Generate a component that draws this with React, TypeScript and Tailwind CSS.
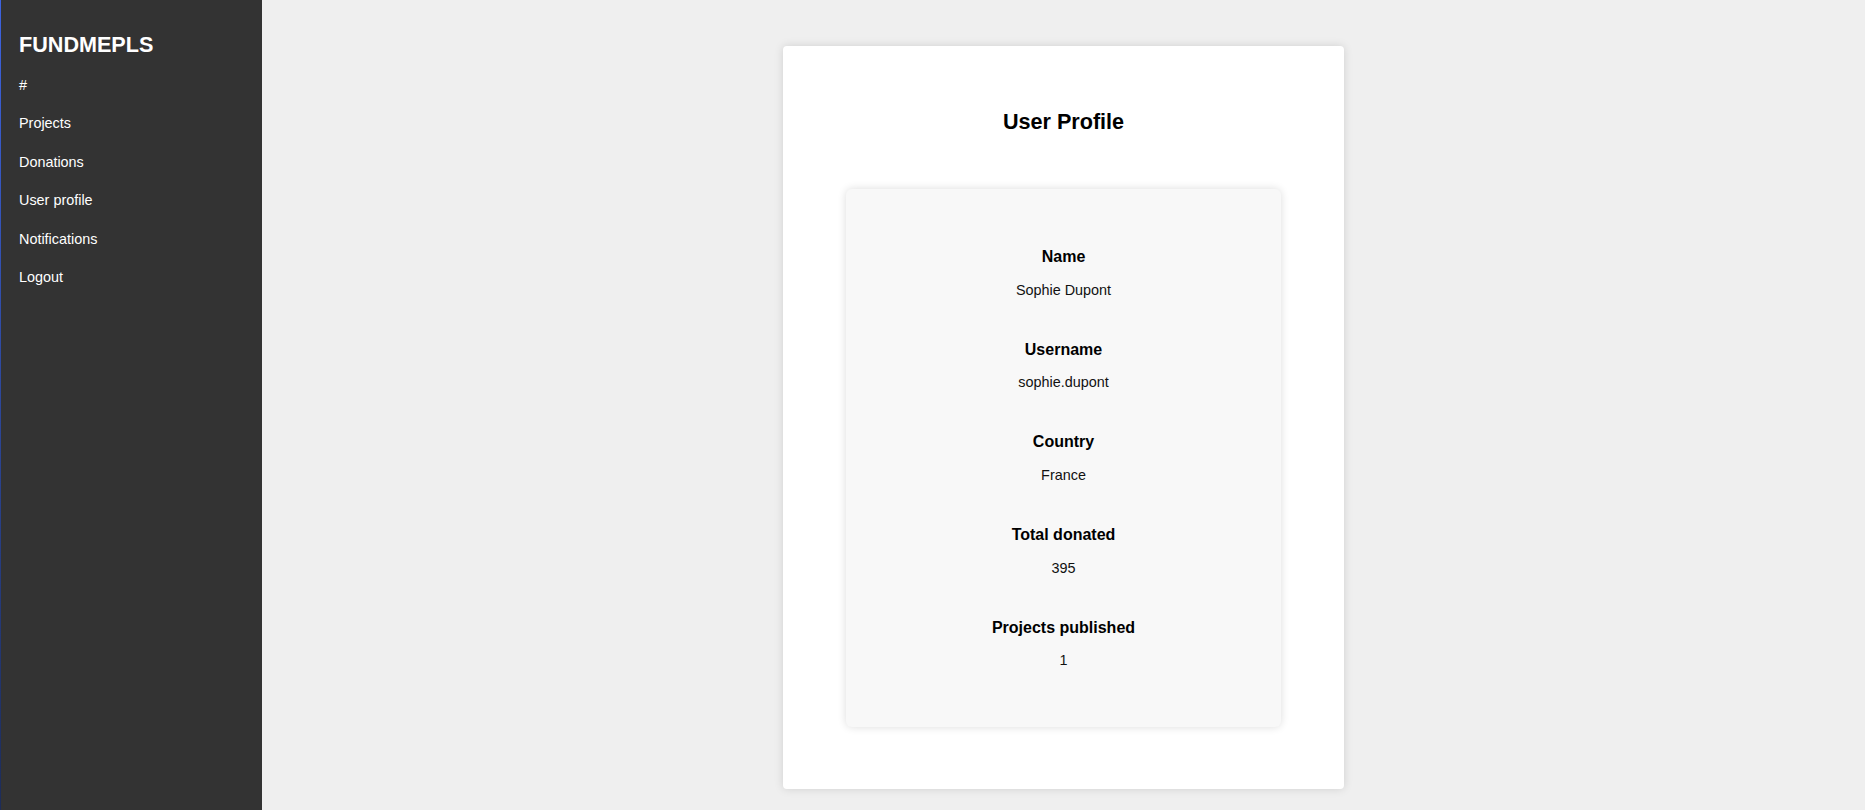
const navItems = ["#", "Projects", "Donations", "User profile", "Notifications", "Logout"];

const fields = [
  { label: "Name", value: "Sophie Dupont" },
  { label: "Username", value: "sophie.dupont" },
  { label: "Country", value: "France" },
  { label: "Total donated", value: "395" },
  { label: "Projects published", value: "1" },
];

function Sidebar() {
  return (
    <aside className="w-[262px] shrink-0 flex bg-[#333333] text-white">
      <div className="w-px bg-gradient-to-b from-[#3d63e0] to-[#1d2c58]" />
      <div className="pl-[18px] pt-[32px]">
        <h1 className="text-[21.6px] leading-[25px] font-bold">FUNDMEPLS</h1>
        <nav className="mt-[8.5px] flex flex-col">
          {navItems.map((item) => (
            <a key={item} href="#" className="text-[14.4px] leading-[38.5px] text-white">
              {item}
            </a>
          ))}
        </nav>
      </div>
    </aside>
  );
}

function ProfileCard() {
  return (
    <div className="w-[561px] bg-white rounded-[4px] shadow-[0_0_10px_rgba(0,0,0,0.13)] p-[63px] pb-[62px]">
      <h2 className="text-center text-[21.6px] leading-[25px] font-bold text-black">User Profile</h2>
      <div className="mt-[55px] bg-[#f8f8f8] rounded-[6px] shadow-[0_0_8px_rgba(0,0,0,0.14)] py-[57px] flex flex-col gap-[39px] text-center">
        {fields.map((f) => (
          <div key={f.label}>
            <h3 className="pt-px text-[16px] leading-5 font-bold text-black">{f.label}</h3>
            <p className="mt-[12.7px] text-[14.4px] leading-5 text-[#111]">{f.value}</p>
          </div>
        ))}
      </div>
    </div>
  );
}

export default function App() {
  return (
    <div className="flex min-h-screen font-['Liberation_Sans',Arial,sans-serif]">
      <Sidebar />
      <main className="flex-1 bg-[#efefef] flex justify-center items-start pt-[46px] pb-[21px]">
        <ProfileCard />
      </main>
    </div>
  );
}
